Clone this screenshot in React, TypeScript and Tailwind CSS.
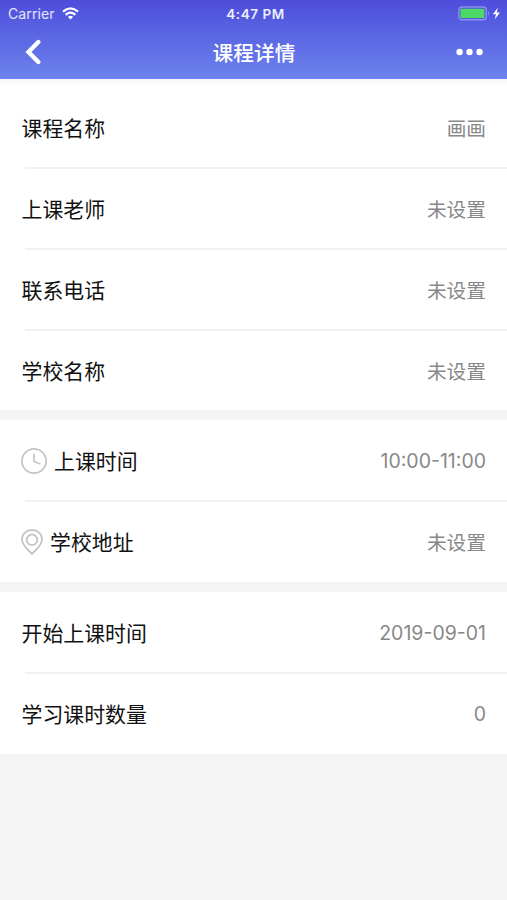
import React from "react";

type RowProps = {
  label: string;
  value: string;
  icon?: React.ReactNode;
  line?: boolean;
  valueClass?: string;
};

function Row({ label, value, icon, line = false, valueClass = "pt-[2px] text-[19.7px]" }: RowProps) {
  return (
    <div className="h-[81px]">
      <div className="flex h-[80px] items-center justify-between pt-[2px] pr-[21px] pl-[21.5px]">
        <div className="flex items-center">
          {icon}
          <span className="pt-[2px] text-[20.9px] leading-[30px] text-[#111]">{label}</span>
        </div>
        <span className={`leading-[30px] text-[#888] ${valueClass}`}>{value}</span>
      </div>
      {line && <div className="ml-[25px] h-[2px] bg-[#f1f1f3]" />}
    </div>
  );
}

function ClockIcon() {
  return (
    <svg className="mr-[7px] -ml-[0.5px] h-[26px] w-[26px]" viewBox="0 0 26 26" fill="none" stroke="#c4c4c4" strokeWidth="1.7">
      <circle cx="13" cy="13" r="12.1" />
      <path d="M13 5.5V13.5L19.5 16" />
    </svg>
  );
}

function PinIcon() {
  return (
    <svg className="mr-[7px] -ml-[0.5px] h-[26px] w-[22px]" viewBox="0 0 22 26" fill="none" stroke="#c4c4c4" strokeWidth="1.8" strokeLinejoin="round">
      <path d="M11 25C9 22.5 1 16.5 1 10.5C1 5 5.5 1 11 1S21 5 21 10.5C21 16.5 13 22.5 11 25Z" />
      <circle cx="11" cy="10.8" r="5.3" />
    </svg>
  );
}

function StatusBar() {
  return (
    <div className="grid h-[27px] grid-cols-3 items-center pr-[5px] pl-[8px]">
      <div className="flex items-center gap-[7px]">
        <span className="text-[14px] tracking-[0.1px] text-white/85">Carrier</span>
        <svg className="h-[13px] w-[17px]" viewBox="0 0 17 13" fill="none" stroke="white" strokeWidth="2.3">
          <path d="M1 4.6Q8.5 -1.9 16 4.6" />
          <path d="M3.7 7.8Q8.5 3.5 13.3 7.8" />
          <path d="M8.5 12.5L5.9 9.9Q8.5 7.7 11.1 9.9Z" fill="white" stroke="none" />
        </svg>
      </div>
      <span className="pt-px pl-px text-center text-[13.5px] font-semibold tracking-[0.55px] text-white/90">4:47 PM</span>
      <svg className="h-[15px] w-[44px] justify-self-end" viewBox="0 0 44 15" fill="none">
        <rect x=".8" y="1" width="27.5" height="12.8" rx="3.2" stroke="#8c91ea" strokeWidth="1.4" />
        <rect x="2.4" y="2.8" width="24" height="9.2" rx="1.3" fill="#4bd964" />
        <path d="M30 5.2Q32.4 7.4 30 9.6Z" fill="#8c91ea" />
        <path d="M39.8 1.8L34.8 8.2H38L36.8 13.2L42 6.6H38.8Z" fill="white" />
      </svg>
    </div>
  );
}

export default function App() {
  return (
    <div className="h-[900px] w-full overflow-hidden bg-[#f5f5f5] font-['Inter','Noto_Sans_CJK_SC',sans-serif]">
      <header className="h-[79px] bg-linear-to-b from-[#4d4ddb] to-[#6e82ed]">
        <StatusBar />
        <div className="grid h-[50px] grid-cols-3 items-center pr-[24px] pl-[24px]">
          <svg className="h-[26px] w-[18px]" viewBox="0 0 18 26" fill="none" stroke="white" strokeWidth="4.4" strokeLinecap="round" strokeLinejoin="miter">
            <path d="M14.3 3L4.5 13L14.3 23" />
          </svg>
          <h1 className="pt-[3px] pl-px text-center text-[20.7px] leading-[30px] font-medium text-white">课程详情</h1>
          <svg className="h-[8px] w-[27px] justify-self-end" viewBox="0 0 27 8" fill="white">
            <circle cx="3.6" cy="4" r="3.2" />
            <circle cx="13.5" cy="4" r="3.2" />
            <circle cx="23.5" cy="4" r="3.2" />
          </svg>
        </div>
      </header>
      <div className="h-[8px] bg-linear-to-b from-[#f6f6f8] to-white" />
      <main className="flex flex-col gap-[10px]">
        <section className="h-[323px] bg-white">
          <Row label="课程名称" value="画画" line />
          <Row label="上课老师" value="未设置" line />
          <Row label="联系电话" value="未设置" line />
          <Row label="学校名称" value="未设置" />
        </section>
        <section className="bg-white">
          <Row label="上课时间" value="10:00-11:00" valueClass="text-[19.5px]" icon={<ClockIcon />} line />
          <Row label="学校地址" value="未设置" icon={<PinIcon />} />
        </section>
        <section className="bg-white">
          <Row label="开始上课时间" value="2019-09-01" valueClass="text-[19.5px]" line />
          <Row label="学习课时数量" value="0" valueClass="text-[19.5px]" />
        </section>
      </main>
    </div>
  );
}
